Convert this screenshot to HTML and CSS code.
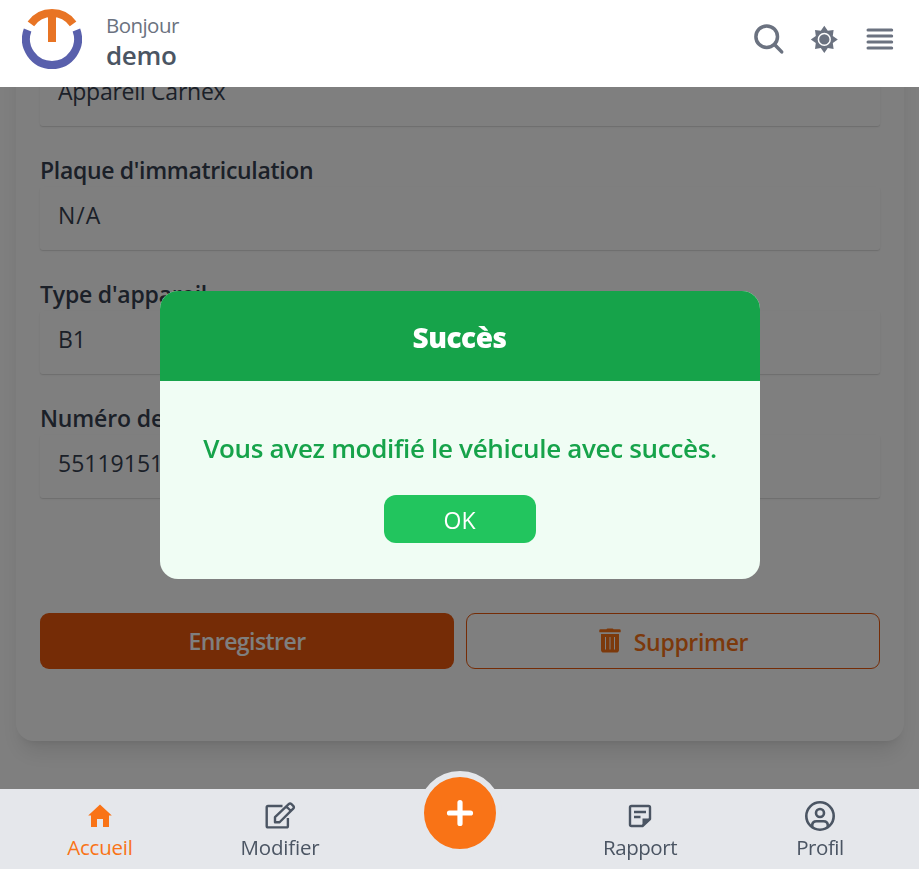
FILE: index.html
```
<!DOCTYPE html>
<html lang="fr">
<head>
<meta charset="utf-8">
<title>Appareil</title>
<link rel="stylesheet" href="styles.css">
</head>
<body>
<header class="topbar">
  <svg class="logo" viewBox="0 0 60 60" fill="none">
    <path d="M8.900 14.900A26 26 0 0 1 51.100 14.900" stroke="#e87424" stroke-width="8"/>
    <path d="M26 5h8v28h-8z" fill="#e87424"/>
    <path d="M5.600 21A26 26 0 1 0 54.400 21" stroke="#5960ac" stroke-width="8"/>
  </svg>
  <div class="greeting">
    <span class="hello">Bonjour</span>
    <span class="user">demo</span>
  </div>
  <div class="tools">
    <svg class="tool" viewBox="0 0 36 36" fill="none" stroke="#6b7280" stroke-linecap="round"><circle cx="16.700" cy="15.700" r="10.800" stroke-width="3.500"/><path d="M25 24l6.700 6.900" stroke-width="3.500"/></svg>
    <svg class="tool" viewBox="0 0 36 36"><path fill="#6b7280" d="M18.300 4.800l3.500 5L27.600 8.900l-.800 6 5 3.500-5 3.500.800 6-5.800-.900-3.500 5-3.500-5-5.800.900.800-6-5-3.500 5-3.500-.800-6 5.800.900z"/><circle cx="18.300" cy="18.400" r="5.900" fill="#6b7280" stroke="#fff" stroke-width="1.500"/></svg>
    <svg class="tool" viewBox="0 0 36 36" stroke="#6b7280" stroke-width="3" stroke-linecap="round"><path d="M6 9H29.700M6 15H29.700M6 21H29.700M6 27H29.700"/></svg>
  </div>
</header>
<main class="page">
  <section class="card">
    <div class="field"><div class="value v-name">Appareil Carnex</div></div>
    <div class="field"><div class="label l-plate">Plaque d'immatriculation</div><div class="value v-na">N/A</div></div>
    <div class="field"><div class="label l-type">Type d'appareil</div><div class="value">B1</div></div>
    <div class="field"><div class="label l-num">Numéro de</div><div class="value">55119151</div></div>
    <div class="actions">
      <button class="btn save"><span>Enregistrer</span></button>
      <button class="btn delete">
        <svg class="trash" viewBox="0 0 24 26"><path fill="#f97316" fill-rule="evenodd" d="M8.500 1.200Q8.700.500 9.500.500h5q.800 0 1 .700h6q1.200 0 1.200 1v1.500q0 .500-.500.500H1.800q-.500 0-.500-.500V2.200q0-1 1.200-1zM3 6h18v15.700q0 2.800-2.800 2.800H5.800Q3 24.500 3 21.700zM7 9v12.500h1V9zM11.500 9v12.500h1V9zM16 9v12.500h1V9z"/></svg>
        <span>Supprimer</span>
      </button>
    </div>
  </section>
</main>
<nav class="tabs">
  <a class="tab active"><svg class="ico" viewBox="0 0 36 36"><path fill="#f97316" d="M18 6.500L29.800 17.500H27V29h-6v-8h-6v8H9V17.500H6.200z"/></svg><span class="t-home">Accueil</span></a>
  <a class="tab"><svg class="ico" viewBox="0 0 36 36" fill="none" stroke="#4b5563" stroke-width="2.400" stroke-linejoin="round"><g transform="translate(.5 0)"><path d="M20 8H5.500Q4.200 8 4.200 9.300V28Q4.200 29.400 5.600 29.400H24Q25.400 29.400 25.400 28V20"/><path d="M12.500 24.300v-5.200L26.200 6.200q1.400-1.300 2.800 0l1.700 1.600q1.400 1.400 0 2.800L17.300 24q-.400.300-.900.300zM23.800 8.500l4.700 4.500"/></g></svg><span class="t-edit">Modifier</span></a>
  <a class="tab add"><span class="plus"><svg viewBox="0 0 36 36" stroke="#fff" stroke-width="5.200" stroke-linecap="round"><path d="M18 7.500v21M7.500 18h21"/></svg></span></a>
  <a class="tab"><svg class="ico" viewBox="0 0 36 36"><path fill="none" stroke="#4b5563" stroke-width="2.400" stroke-linejoin="round" d="M20.500 28H9.500Q8 28 8 26.500V9.500Q8 8 9.500 8h17Q28 8 28 9.500V21zM12 14h12M12 19h6.500"/><path fill="#4b5563" d="M20.500 29V20.500H29z"/></svg><span class="t-report">Rapport</span></a>
  <a class="tab"><svg class="ico" viewBox="0 0 36 36" fill="none" stroke="#4b5563" stroke-width="2.600"><circle cx="18" cy="18" r="13.700"/><circle cx="18" cy="15" r="4"/><path d="M10.200 29V27.500Q10.200 23.300 14.500 23.300h7Q25.800 23.300 25.800 27.500V29"/></svg><span class="t-profile">Profil</span></a>
</nav>
<div class="overlay">
  <div class="modal">
    <h2 class="modal-title">Succès</h2>
    <div class="modal-body">
      <p class="message">Vous avez modifié le véhicule avec succès.</p>
      <button class="ok">OK</button>
    </div>
  </div>
</div>
</body>
</html>
```
FILE: styles.css
```
* { box-sizing: border-box; }
body { margin: 0; height: 869px; display: flex; flex-direction: column; overflow: hidden; font-family: "Open Sans", "Noto Sans", sans-serif; color: #374151; background: #fff; }
button { font: inherit; border: 0; padding: 0; }
.topbar { flex: none; height: 87px; padding: 0 21px 0 22px; display: flex; align-items: flex-start; background: #fff; position: relative; z-index: 3; }
.logo { width: 60px; height: 60px; margin-top: 9px; }
.greeting { display: flex; flex-direction: column; margin: 10px 0 0 24px; }
.hello { font-size: 20.5px; line-height: 30px; letter-spacing: -.55px; color: #6b7280; }
.user { font-size: 26px; line-height: 30px; font-weight: 600; letter-spacing: -.35px; color: #4b5563; }
.tools { margin: 21px 0 0 auto; display: flex; gap: 20px; }
.tool { width: 36px; height: 36px; }
.page { flex: 1; min-height: 0; padding: 0 15px 48px 16px; display: flex; flex-direction: column; justify-content: flex-end; overflow: hidden; }
.card { flex: none; padding: 60px 24px 72px; border-radius: 18px; background: #fff; box-shadow: 0 15px 22px -4px rgba(0,0,0,.1), 0 6px 9px -6px rgba(0,0,0,.1); }
.label { height: 36px; line-height: 38px; font-size: 23px; font-weight: 600; }
.l-plate { letter-spacing: -.32px; }
.l-type { letter-spacing: -.2px; }
.l-num { letter-spacing: -.15px; }
.value { height: 63px; margin-bottom: 25px; padding: 10px 18px; line-height: 36px; font-size: 23px; border-radius: 3px; box-shadow: 0 1px 3px rgba(0,0,0,.06), 0 1px 1px rgba(0,0,0,.1); }
.v-name { letter-spacing: -.25px; line-height: 37px; }
.v-na { letter-spacing: 1px; }
.actions { margin-top: 115px; display: grid; grid-template-columns: 1fr 1fr; gap: 12px; }
.btn { height: 56px; border-radius: 9px; display: flex; align-items: center; justify-content: center; font-size: 23px; font-weight: 600; }
.save { background: #ea580c; color: #fff; letter-spacing: -.55px; }
.delete { background: #fff; color: #f97316; border: 1px solid #ea580c; gap: 12px; letter-spacing: -.33px; padding-top: 2px; }
.trash { width: 24px; height: 26px; margin-top: -2px; }
.tabs { flex: none; height: 80px; display: grid; grid-template-columns: repeat(5, 180px); justify-content: center; background: #e5e7eb; position: relative; z-index: 3; }
.tab { display: flex; flex-direction: column; align-items: center; padding-top: 9px; font-size: 20.5px; line-height: 26px; color: #4b5563; }
.ico { width: 36px; height: 36px; }
.t-home, .t-edit { letter-spacing: -.2px; padding-left: 1px; }
.t-report, .t-profile { letter-spacing: -.45px; padding-left: 1px; }
.active { color: #f97316; }
.add { padding: 0; }
.plus { flex: none; width: 84px; height: 84px; margin-top: -18px; border: 6px solid #e5e7eb; border-radius: 50%; background: #f97316; display: flex; align-items: center; justify-content: center; }
.plus svg { width: 36px; height: 36px; }
.overlay { position: fixed; inset: 0; z-index: 2; background: rgba(0,0,0,.5); display: flex; align-items: center; justify-content: center; }
.modal { width: 600px; height: 288px; border-radius: 18px; overflow: hidden; background: #f0fdf4; }
.modal-title { margin: 0; height: 90px; line-height: 93px; text-align: center; background: #16a34a; color: #fff; font-size: 28px; font-weight: 800; letter-spacing: -.5px; }
.modal-body { padding-top: 47px; display: flex; flex-direction: column; align-items: center; }
.message { margin: 0 0 27px; padding-left: 1px; line-height: 40px; font-size: 26px; font-weight: 600; letter-spacing: -.32px; color: #16a34a; white-space: nowrap; }
.ok { width: 152px; height: 48px; border-radius: 12px; background: #22c55e; color: #fff; font-size: 23px; line-height: 50px; }
```
